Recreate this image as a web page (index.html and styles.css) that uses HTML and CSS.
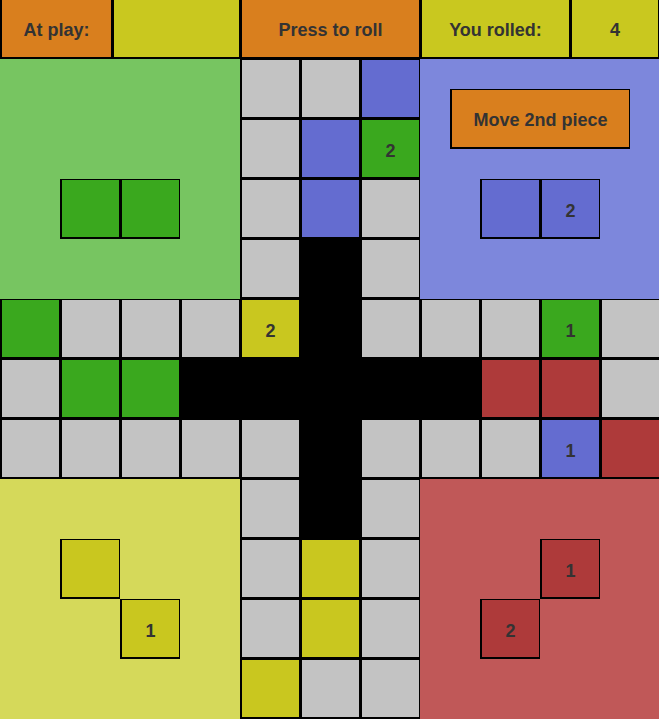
FILE: index.html
```html
<!DOCTYPE html>
<html lang="en">
<head>
<meta charset="utf-8">
<title>Ludo</title>
<link rel="stylesheet" href="styles.css">
</head>
<body>
<div class="game">
  <header class="status">
    <div class="status-cell orange">At play:</div>
    <div class="status-cell yellow"></div>
    <div class="status-cell orange">Press to roll</div>
    <div class="status-cell yellow">You rolled:</div>
    <div class="status-cell yellow">4</div>
  </header>

  <main class="board">
    <section class="home home-green">
      <div class="piece green at-r2-c1"></div>
      <div class="piece green at-r2-c2"></div>
    </section>
    <section class="home home-blue">
      <button class="action">Move 2nd piece</button>
      <div class="piece blue at-r2-c1"></div>
      <div class="piece blue at-r2-c2">2</div>
    </section>
    <section class="home home-yellow">
      <div class="piece yellow at-r1-c1"></div>
      <div class="piece yellow at-r2-c2">1</div>
    </section>
    <section class="home home-red">
      <div class="piece red at-r1-c2">1</div>
      <div class="piece red at-r2-c1">2</div>
    </section>

    <!-- row 0 -->
    <div class="cell"></div><div class="cell"></div><div class="cell blue"></div>
    <!-- row 1 -->
    <div class="cell"></div><div class="cell blue"></div><div class="cell green">2</div>
    <!-- row 2 -->
    <div class="cell"></div><div class="cell blue"></div><div class="cell"></div>
    <!-- row 3 -->
    <div class="cell"></div><div class="cell void"></div><div class="cell"></div>
    <!-- row 4 -->
    <div class="cell green"></div><div class="cell"></div><div class="cell"></div><div class="cell"></div>
    <div class="cell yellow">2</div><div class="cell void"></div><div class="cell"></div>
    <div class="cell"></div><div class="cell"></div><div class="cell green">1</div><div class="cell"></div>
    <!-- row 5 -->
    <div class="cell"></div><div class="cell green"></div><div class="cell green"></div><div class="cell void"></div>
    <div class="cell void"></div><div class="cell void"></div><div class="cell void"></div>
    <div class="cell void"></div><div class="cell red"></div><div class="cell red"></div><div class="cell"></div>
    <!-- row 6 -->
    <div class="cell"></div><div class="cell"></div><div class="cell"></div><div class="cell"></div>
    <div class="cell"></div><div class="cell void"></div><div class="cell"></div>
    <div class="cell"></div><div class="cell"></div><div class="cell blue">1</div><div class="cell red"></div>
    <!-- row 7 -->
    <div class="cell"></div><div class="cell void"></div><div class="cell"></div>
    <!-- row 8 -->
    <div class="cell"></div><div class="cell yellow"></div><div class="cell"></div>
    <!-- row 9 -->
    <div class="cell"></div><div class="cell yellow"></div><div class="cell"></div>
    <!-- row 10 -->
    <div class="cell yellow"></div><div class="cell"></div><div class="cell"></div>
  </main>
</div>
</body>
</html>
```

FILE: styles.css
```css
html, body {
  margin: 0;
  padding: 0;
  background: #000;
  overflow: hidden;
}

.game {
  width: 659px;
  font-family: "Liberation Sans", Arial, sans-serif;
  font-weight: bold;
  font-size: 18px;
  color: #333;
}

/* top status strip */
.status {
  display: grid;
  grid-template-columns: 112px 128px 180px 150px 89px;
  height: 59px;
}

.status-cell {
  box-sizing: border-box;
  border: 0 solid #000;
  border-width: 0 1px 2px 2px;
  display: flex;
  align-items: center;
  justify-content: center;
  padding-top: 4px;
}

.orange { background: #d97f1e; }
.status-cell.yellow { background: #c9c81f; }

/* board */
.board {
  display: grid;
  grid-template-columns: repeat(11, 60px);
  grid-template-rows: repeat(11, 60px);
  width: 660px;
}

/* squares, pieces and the action button share the same edge */
.cell,
.piece,
.action {
  box-sizing: border-box;
  border: 0 solid #000;
  border-width: 1px 1px 2px 2px;
}

.cell {
  background: #c3c3c3;
  display: flex;
  align-items: center;
  justify-content: center;
  padding-top: 5px;
}

.cell.void { background: #000; }
.green { background: #3aa81e; }
.blue { background: #646cd0; }
.yellow { background: #c9c71f; }
.red { background: #ae3a3a; }

/* home yards */
.home {
  display: grid;
  grid-template-columns: repeat(4, 60px);
  grid-template-rows: repeat(4, 60px);
}

.home-green  { grid-area: 1 / 1 / 5 / 5;   background: #77c561; }
.home-blue   { grid-area: 1 / 8 / 5 / 12;  background: #7d87dc; }
.home-yellow { grid-area: 8 / 1 / 12 / 5;  background: #d5d95a; }
.home-red    { grid-area: 8 / 8 / 12 / 12; background: #c05858; }

.piece {
  display: flex;
  align-items: center;
  justify-content: center;
  padding-top: 5px;
}

.at-r1-c1 { grid-area: 2 / 2; }
.at-r1-c2 { grid-area: 2 / 3; }
.at-r2-c1 { grid-area: 3 / 2; }
.at-r2-c2 { grid-area: 3 / 3; }

.action {
  grid-area: 1 / 1 / 2 / 5;
  align-self: start;
  justify-self: start;
  margin: 30px 0 0 30px;
  width: 180px;
  height: 60px;
  background: #d97f1e;
  font: inherit;
  color: #333;
  padding: 4px 0 0;
  cursor: pointer;
}
```
